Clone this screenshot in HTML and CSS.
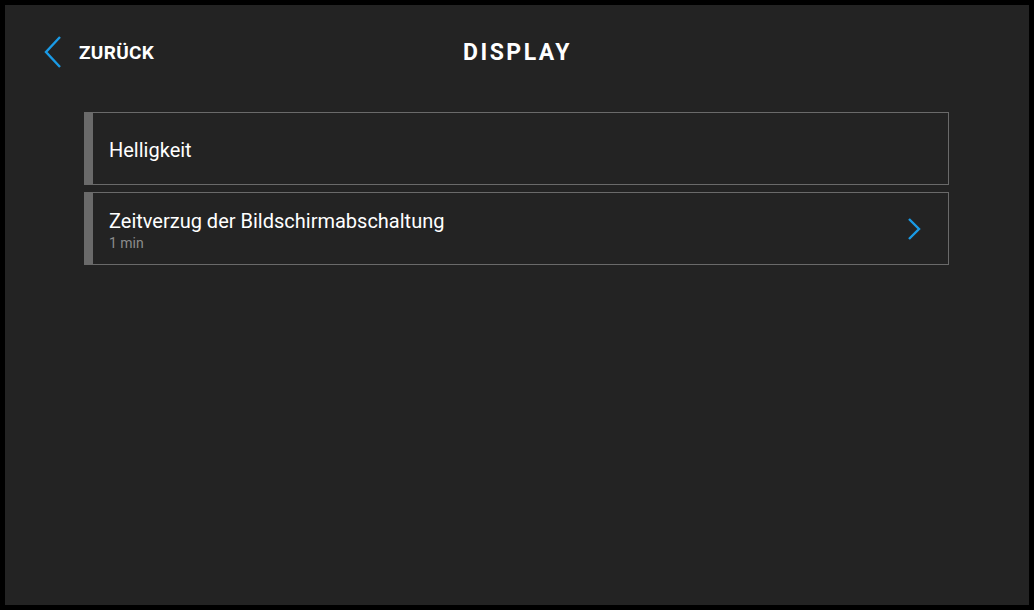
FILE: index.html
```html
<!DOCTYPE html>
<html lang="de">
<head>
  <meta charset="UTF-8">
  <title>Display</title>
  <link rel="stylesheet" href="styles.css">
</head>
<body>
  <div class="screen">
    <div class="header">
      <button class="back">
        <svg width="18" height="32" viewBox="0 0 18 32"><path d="M16 1 L2 16 L16 31" fill="none" stroke="#1a9be6" stroke-width="2.4"/></svg>
        <span>Zurück</span>
      </button>
      <h1>Display</h1>
      <div></div>
    </div>
    <div class="list">
      <div class="item">
        <div class="item-text">
          <div class="item-title">Helligkeit</div>
        </div>
      </div>
      <div class="item">
        <div class="item-text">
          <div class="item-title">Zeitverzug der Bildschirmabschaltung</div>
          <div class="item-value">1 min</div>
        </div>
        <svg class="chevron" width="13" height="22" viewBox="0 0 13 22"><path d="M1 1 L11 11 L1 21" fill="none" stroke="#1a9be6" stroke-width="2.4"/></svg>
      </div>
    </div>
  </div>
</body>
</html>
```

FILE: styles.css
```css
* {
  margin: 0;
  padding: 0;
  box-sizing: border-box;
  font-family: Roboto, "Liberation Sans", sans-serif;
}
body {
  background: #000000;
  padding: 5px;
}
.screen {
  width: 1024px;
  height: 600px;
  background: #232323;
  color: #ffffff;
}
.header {
  height: 94px;
  display: grid;
  grid-template-columns: 1fr auto 1fr;
  align-items: center;
}
.back {
  display: flex;
  align-items: center;
  gap: 17px;
  padding-left: 39px;
  background: none;
  border: none;
  color: #ffffff;
  font-size: 19px;
  font-weight: 700;
  letter-spacing: 0.3px;
  text-transform: uppercase;
}
.back span {
  font-family: Roboto, "Liberation Sans", sans-serif;
}
.header h1 {
  font-size: 23px;
  font-weight: 700;
  letter-spacing: 2.5px;
  text-transform: uppercase;
  margin-left: 1px;
}
.list {
  padding: 13px 80px 0 79px;
  display: flex;
  flex-direction: column;
  gap: 7px;
}
.item {
  height: 73px;
  border: 1px solid #6a6a6a;
  border-left: 9px solid #6a6a6a;
  padding: 0 27px 0 16px;
  display: flex;
  align-items: center;
  justify-content: space-between;
}
.item-text {
  padding-top: 2px;
}
.item-title {
  font-size: 20px;
}
.item-value {
  font-size: 14px;
  color: #8c8c8c;
  margin-top: 2px;
}
```
